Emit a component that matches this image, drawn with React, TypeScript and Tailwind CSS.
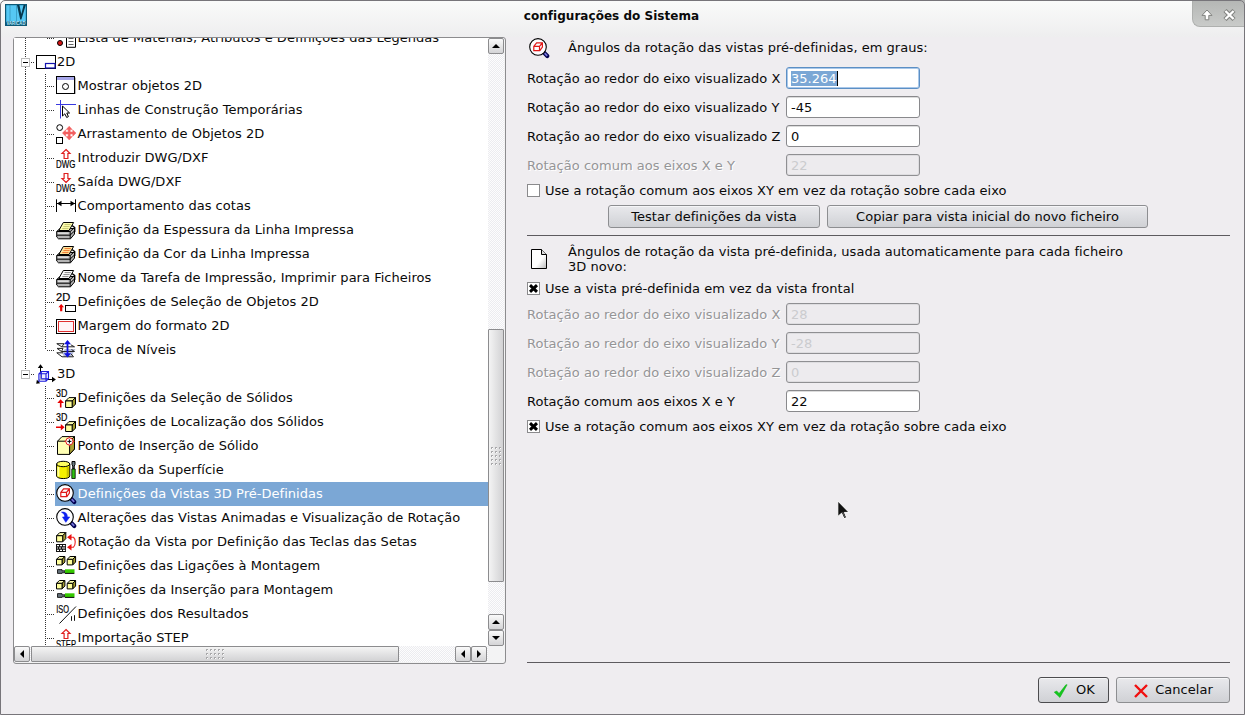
import React from "react";

const BLACK = "#000";
const ISO_FONT = "'Liberation Sans Narrow','Liberation Sans',sans-serif";

function Tiny({ x, y, w, children, size = 10.4 }: { x: number; y: number; w: number; children: string; size?: number }) {
  return (
    <text x={x} y={y} fontSize={size} textLength={w} lengthAdjust="spacingAndGlyphs" fontFamily={ISO_FONT} fill="#000" stroke="#000" strokeWidth=".2">
      {children}
    </text>
  );
}

function Box({ x, y, s }: { x: number; y: number; s: number }) {
  const d = s * 0.34;
  return (
    <g stroke={BLACK} strokeLinejoin="round">
      <path d={`M${x} ${y + d}L${x + d} ${y}H${x + s}L${x + s - d} ${y + d}Z`} fill="#ffffb0" />
      <path d={`M${x + s} ${y}V${y + s - d}L${x + s - d} ${y + s}V${y + d}Z`} fill="#a8a030" />
      <path d={`M${x} ${y + d}H${x + s - d}V${y + s}H${x}Z`} fill="#ffff9c" />
    </g>
  );
}

const outlineUp = <path d="M10 1.5L14 5.5H11.9V10.5H8.1V5.5H6Z" fill="#fff" stroke="#e02020" strokeWidth="1.2" />;
const outlineDown = <path d="M10 10.5L14 6.5H11.9V1.5H8.1V6.5H6Z" fill="#fff" stroke="#e02020" strokeWidth="1.2" />;

function printer(paper: string, ink: string) {
  return (
    <g stroke={BLACK} strokeLinejoin="round">
      <path d="M.7 11.5L4 8.5H18.5V14L14.5 18.8H2.5L.7 17Z" fill="#b4b4b4" />
      <path d="M.7 11.5H14.2L18.5 7.5M14.2 11.5V18.5M1 15.2H14L18.5 11" fill="none" />
      <path d="M2.8 10.5L7.3 2.5H17.6L13 10.5Z" fill={paper} />
      <path d="M8.6 4.6H14.8M7.4 6.6H13.6M6.3 8.6H12.5" fill="none" stroke={ink} />
      <path d="M16 5.5L18.7 7.5V12" fill="none" strokeWidth="1.4" />
      <path d="M2 13.2H12.5" stroke="#eee" />
    </g>
  );
}

const lens = (
  <g>
    <path d="M15 14.6L18.3 18" stroke="#000050" strokeWidth="4.2" strokeLinecap="round" />
    <path d="M15.6 15.2L18.2 17.9" stroke="#7676d8" strokeWidth="1.8" />
    <circle cx="9" cy="8.9" r="8.3" fill="#fdfdff" stroke={BLACK} strokeWidth="1.1" />
  </g>
);

const lensCube = (
  <g>
    {lens}
    <path d="M4.8 8.3L7.6 4.9H13.4V9L10.8 12.6H4.8ZM4.8 8.3H10.5V12.5M10.5 8.3L13.3 5" fill="none" stroke="#e01818" strokeWidth="1.2" />
  </g>
);

const linkBoxes = (
  <g>
    <Box x={0.5} y={0.5} s={8.4} />
    <Box x={11.2} y={0.5} s={8.4} />
    <path d="M1.5 13.6H6V14.8H9V16.8H6V17.4H1.5Z" fill="#647078" stroke={BLACK} strokeWidth=".8" />
    <rect x="9" y="13.3" width="9.5" height="3.7" fill="#35c800" />
    <path d="M9 17.4H18.4" stroke={BLACK} />
  </g>
);

const ICONS: Record<string, React.ReactNode> = {
  list: (
    <g>
      <circle cx="4" cy="15" r="2.5" fill="#d81414" stroke={BLACK} />
      <path d="M10.5 3.5H19.5V19.3H10.5Z" fill="#fff" stroke={BLACK} />
      <path d="M12.5 7.5H17.5M12.5 10.5H17.5M12.5 13.5H17.5M12.5 16.5H17.5" stroke="#666" />
    </g>
  ),
  sheet2d: (
    <g>
      <rect x=".5" y="3.5" width="19" height="13" fill="#fff" stroke={BLACK} />
      <rect x="9.5" y="11.5" width="9.5" height="4.5" fill="#fff" stroke="#1414b0" strokeWidth="1.2" />
    </g>
  ),
  show: (
    <g>
      <rect x="1.5" y="1.5" width="18" height="16.5" fill="#777" />
      <rect x=".5" y=".5" width="18" height="17" fill="#fff" stroke={BLACK} />
      <rect x="1" y="1" width="17" height="3" fill="#a6a6ea" />
      <circle cx="9.5" cy="10.5" r="3" fill="#fff" stroke={BLACK} />
    </g>
  ),
  lines: (
    <g>
      <path d="M0 4.5H20M4.5 0V18.5" stroke="#3838e0" />
      <path d="M6.5 6V16L8.8 13.8L10.7 17.5L12.4 16.6L10.8 13H13.6Z" fill="#fff" stroke={BLACK} />
    </g>
  ),
  drag: (
    <g>
      <circle cx="3.7" cy="3.6" r="2.9" fill="#fff" stroke={BLACK} />
      <rect x=".5" y="13.5" width="6" height="6" fill="#fff" stroke={BLACK} />
      <path d="M13.2 2.2L16.2 5.6H14.2V8H16.8V6L20 9L16.8 12.2V10H14.2V12.6H16.2L13.2 16L10.2 12.6H12.2V10H9.6V12.2L6.4 9L9.6 6V8H12.2V5.6H10.2Z" fill="#f26060" stroke="#f26060" strokeWidth=".5" />
    </g>
  ),
  dwgIn: (
    <g>
      {outlineUp}
      <Tiny x={0} y={20} w={19.4}>DWG</Tiny>
    </g>
  ),
  dwgOut: (
    <g>
      {outlineDown}
      <Tiny x={0} y={20} w={19.4}>DWG</Tiny>
    </g>
  ),
  dim: (
    <g>
      <path d="M.5 3.3V16M19.5 3.3V16M1 7.5H19" stroke={BLACK} />
      <path d="M1 7.5L5.5 4.8V10.2ZM19 7.5L14.5 4.8V10.2Z" />
    </g>
  ),
  print1: printer("#ffffb0", "#c4c470"),
  print2: printer("#ffe6a0", "#f07830"),
  print3: printer("#ffffff", "#8a8a8a"),
  sel2d: (
    <g>
      <Tiny x={0} y={9.2} w={14.3} size={11.6}>2D</Tiny>
      <path d="M5.2 12L8 15.2H6.3V19.3H4.1V15.2H2.4Z" fill="#e80000" />
      <rect x="9.5" y="13.5" width="10" height="6" fill="#fff" stroke={BLACK} />
    </g>
  ),
  margin: (
    <g>
      <rect x=".5" y="3.5" width="19" height="14" fill="#fff" stroke={BLACK} />
      <rect x="2.5" y="5.5" width="15" height="10" fill="#fff4f6" stroke="#e03030" />
    </g>
  ),
  levels: (
    <g stroke="#222" fill="#f2f2f2">
      <path d="M6 12.5L9 9H19.5L15 17H8Z" fill="#b6bedc" stroke="none" />
      <path d="M.8 3.7H8L5.8 6.8H18.5L14.8 4.8M.8 3.7L5.8 6.8M1 8.4H7L5.5 11.5H18.5L15.5 9.5M1 8.4L5.5 11.5M.8 12.8H7M.8 12.8L6 16.8H17.5L15 13.8" fill="none" />
      <path d="M11.5 0L15 4.2H12.4V13.3H15L11.5 17.6L8 13.3H10.6V4.2H8Z" fill="#1010e0" stroke="none" />
    </g>
  ),
  root3d: (
    <g>
      <path d="M4.5 16V2M3 15.5H18M5 15L1 19" stroke={BLACK} fill="none" />
      <path d="M4.5 .3L7.2 4H1.8ZM19.9 15.5L16 12.7V18.3ZM.2 19.8L.9 15.8L4.2 19.2Z" />
      <path d="M2.9 9.8L5.3 7.5H12.5V14.5L10 17.3H2.9ZM2.9 9.8H10V17M10 9.8L12.5 7.5M5.3 8V14.6M5.3 14.7H12" fill="#e8e8ff" fillOpacity=".75" stroke="#1c1cdc" strokeWidth="1.1" />
    </g>
  ),
  sel3d: (
    <g>
      <Tiny x={0} y={8.8} w={11.4} size={11.6}>3D</Tiny>
      <path d="M4.6 11.2L8 15H5.5V19.4H3.9V15H1.3Z" fill="#e80000" />
      <Box x={9.6} y={9.6} s={9.9} />
    </g>
  ),
  loc3d: (
    <g>
      <Tiny x={0} y={8.8} w={11.4} size={11.6}>3D</Tiny>
      <path d="M8.6 15.3L4.8 18.6V16.1H0V14.5H4.8V12Z" fill="#e80000" />
      <Box x={9.6} y={9.6} s={9.9} />
    </g>
  ),
  insert: (
    <g>
      <path d="M1.5 5.2L6 .6H18.5V13L13.6 18.4H1.5Z" fill="#ffffb4" stroke={BLACK} />
      <path d="M13.6 5.2L18.5 .6V13L13.6 18.4Z" fill="#aaa032" stroke={BLACK} />
      <path d="M1.6 5.2H13.6" stroke={BLACK} />
      <circle cx="13.4" cy="5.4" r="3.6" fill="#fff" stroke="#e22020" />
      <path d="M13.4 3.4V7.4M11.4 5.4H15.4" stroke={BLACK} />
      <path d="M13.4 .6V2M13.4 9V10.4M8.5 5.4H10M17 5.4H18.5" stroke="#e22020" />
    </g>
  ),
  surface: (
    <g stroke={BLACK}>
      <path d="M.6 4V16C1 19.4 13.6 19.4 13.8 16V4Z" fill="#f6f000" />
      <path d="M2.4 7V16.5" stroke="#ffffa0" strokeWidth="2" />
      <path d="M11.8 7V16.8" stroke="#c8c000" strokeWidth="2.2" />
      <ellipse cx="7.2" cy="4" rx="6.6" ry="2.7" fill="#ffff60" />
      <path d="M16 1.5H19V4.5L18.2 6V9H16.8V6L16 4.5Z" fill="#6c7c84" />
      <path d="M15.8 9H19.2V18.5H15.8Z" fill="#30c010" strokeWidth=".8" />
    </g>
  ),
  lensCube,
  lensArrow: (
    <g>
      {lens}
      <path d="M5.5 4.2C9 3.6 11.5 5.5 11.3 9H13.7L9.8 14.3L6.5 9H8.6C8.8 7 8 5.5 5.5 4.2Z" fill="#0c20f0" stroke="#0c20f0" strokeWidth=".6" />
    </g>
  ),
  keys: (
    <g>
      <Box x={0.6} y={0.6} s={9.2} />
      <rect x="0" y="12" width="10" height="8" fill="#111" />
      <path d="M1 13.6H3M4 13.6H6M7 13.6H9.2M1 16H2M3 16H5M6 16H9.2M1 18.4H3M4 18.4H6M7 18.4H9.2" stroke="#fff" strokeWidth="1.2" />
      <path d="M14 5.2H17.5C19.8 7 19.8 13 17.5 15.2H14" fill="none" stroke="#ee2020" strokeWidth="1.1" />
      <path d="M11 5.2L15.5 2V8.4ZM11 15.2L15.5 12V18.4Z" fill="#ee1010" />
    </g>
  ),
  link: linkBoxes,
  iso: (
    <g>
      <Tiny x={0.3} y={8.8} w={12.8} size={11.2}>ISO</Tiny>
      <path d="M20 2.5L3.5 19.5M15.5 12.2V16.8M18.5 11.2V16.8" stroke="#111" fill="none" />
    </g>
  ),
  step: (
    <g>
      {outlineUp}
      <Tiny x={0} y={20} w={20}>STEP</Tiny>
    </g>
  ),
};

function Icon({ name }: { name: string }) {
  return (
    <svg width="20" height="20" viewBox="0 0 20 20" className="shrink-0 overflow-visible">
      {ICONS[name]}
    </svg>
  );
}

type Row = { icon: string; text: string; root?: boolean; last?: boolean; sel?: boolean; outer?: boolean };

const ROWS: Row[] = [
  { icon: "list", text: "Lista de Materiais, Atributos e Definições das Legendas", last: true, outer: true },
  { icon: "sheet2d", text: "2D", root: true, outer: true },
  { icon: "show", text: "Mostrar objetos 2D", outer: true },
  { icon: "lines", text: "Linhas de Construção Temporárias", outer: true },
  { icon: "drag", text: "Arrastamento de Objetos 2D", outer: true },
  { icon: "dwgIn", text: "Introduzir DWG/DXF", outer: true },
  { icon: "dwgOut", text: "Saída DWG/DXF", outer: true },
  { icon: "dim", text: "Comportamento das cotas", outer: true },
  { icon: "print1", text: "Definição da Espessura da Linha Impressa", outer: true },
  { icon: "print2", text: "Definição da Cor da Linha Impressa", outer: true },
  { icon: "print3", text: "Nome da Tarefa de Impressão, Imprimir para Ficheiros", outer: true },
  { icon: "sel2d", text: "Definições de Seleção de Objetos 2D", outer: true },
  { icon: "margin", text: "Margem do formato 2D", outer: true },
  { icon: "levels", text: "Troca de Níveis", last: true, outer: true },
  { icon: "root3d", text: "3D", root: true },
  { icon: "sel3d", text: "Definições da Seleção de Sólidos" },
  { icon: "loc3d", text: "Definições de Localização dos Sólidos" },
  { icon: "insert", text: "Ponto de Inserção de Sólido" },
  { icon: "surface", text: "Reflexão da Superfície" },
  { icon: "lensCube", text: "Definições da Vistas 3D Pré-Definidas", sel: true },
  { icon: "lensArrow", text: "Alterações das Vistas Animadas e Visualização de Rotação" },
  { icon: "keys", text: "Rotação da Vista por Definição das Teclas das Setas" },
  { icon: "link", text: "Definições das Ligações à Montagem" },
  { icon: "link", text: "Definições da Inserção para Montagem" },
  { icon: "iso", text: "Definições dos Resultados" },
  { icon: "step", text: "Importação STEP" },
];

const VDOTS = "bg-[repeating-linear-gradient(to_bottom,#333_0_1px,transparent_1px_2px)]";
const HDOTS = "bg-[repeating-linear-gradient(to_right,#333_0_1px,transparent_1px_2px)]";

function TreeRow({ row }: { row: Row }) {
  if (row.root) {
    return (
      <div className="flex h-6 shrink-0 items-center">
        <div className="flex h-full w-[17px] shrink-0 flex-col items-center pl-[6px]">
          <div className={`h-[8px] w-px shrink-0 ${VDOTS}`} />
          <div className="flex h-[9px] w-[9px] shrink-0 items-center justify-center border border-[#bcbcbc] bg-white">
            <div className="h-px w-[5px] bg-black" />
          </div>
          <div className={`h-[7px] w-px shrink-0 ${row.outer ? VDOTS : ""}`} />
        </div>
        <div className={`mr-[2px] h-px w-[3px] shrink-0 ${HDOTS}`} />
        <Icon name={row.icon} />
        <span className="pb-[2px] pl-[1px] whitespace-nowrap">{row.text}</span>
      </div>
    );
  }
  return (
    <div className="flex h-6 shrink-0 items-center">
      <div className={`ml-[11px] h-full w-px shrink-0 ${row.outer ? VDOTS : ""}`} />
      <div className={`ml-[19px] w-px shrink-0 ${row.last ? "h-3 self-start" : "h-full"} ${VDOTS}`} />
      <div className={`ml-px h-px w-[8px] shrink-0 ${HDOTS}`} />
      <div className={`flex h-full flex-1 items-center pl-px ${row.sel ? "bg-[#7ba7d5] text-white" : ""}`}>
        <Icon name={row.icon} />
        <span className="pb-[2px] pl-[1.6px] whitespace-nowrap">{row.text}</span>
      </div>
    </div>
  );
}

function Arrow({ dir }: { dir: "up" | "down" | "left" | "right" }) {
  const d = {
    up: "M4 2L8 6H0Z",
    down: "M4 6L8 2H0Z",
    left: "M2 4L6 0V8Z",
    right: "M6 4L2 0V8Z",
  }[dir];
  return (
    <div className="flex h-4 w-4 shrink-0 items-center justify-center rounded-[2px] border border-[#8c8c8e] bg-linear-to-b from-[#fafafa] to-[#d4d4d6]">
      <svg width="8" height="8" viewBox="0 0 8 8">
        <path d={d} />
      </svg>
    </div>
  );
}

const TROUGH = "bg-[#f8f8f9] bg-[repeating-conic-gradient(#ececf0_0_25%,#fdfdfd_0_50%)] bg-[length:2px_2px]";

function Grip({ vertical }: { vertical?: boolean }) {
  return (
    <div className={`grid gap-[2px] ${vertical ? "grid-cols-3" : "grid-cols-5"}`}>
      {Array.from({ length: 15 }, (_, i) => (
        <span key={i} className="h-[2px] w-[2px] border-t border-l border-[#a8a8aa] bg-white" />
      ))}
    </div>
  );
}

function Field({ label, value, disabled, focus }: { label: string; value: string; disabled?: boolean; focus?: boolean }) {
  return (
    <div className="flex h-[29px] items-center">
      <span className={`w-[259px] pt-px whitespace-nowrap ${disabled ? "text-[#959597] [text-shadow:1px_1px_0_#fff]" : ""}`}>{label}</span>
      <div
        className={`flex h-[22px] w-[134px] items-center rounded-[3px] border pt-px pl-1 ${
          focus
            ? "border-[#5c8fc4] bg-white shadow-[inset_0_0_0_1px_#a9c8ea]"
            : disabled
              ? "border-[#8f8f92] bg-[#edebee] text-[#cbcbce] shadow-[inset_0_0_0_1px_#dedde0]"
              : "border-[#89898c] bg-white shadow-[inset_0_1px_0_#dcdcdc]"
        }`}
      >
        {focus ? <span className="h-[15px] border-r border-black bg-[#7ba7d5] leading-[15px] text-white">{value}</span> : value}
      </div>
    </div>
  );
}

function Check({ label, on }: { label: string; on?: boolean }) {
  return (
    <div className="flex h-4 items-center">
      <div className="mr-[5px] flex h-[13px] w-[13px] items-center justify-center border border-[#8a8a8c] bg-white">
        {on && (
          <svg width="9" height="9" viewBox="0 0 9 9">
            <path d="M1 1.2L8 7.8M8 1.2L1 7.8" stroke="#000" strokeWidth="3" />
          </svg>
        )}
      </div>
      <span className="whitespace-nowrap">{label}</span>
    </div>
  );
}

const BTN =
  "flex items-center justify-center rounded-[3px] border bg-linear-to-b from-[#e9e9ec] via-[#dcdde1] to-[#d0d1d5] whitespace-nowrap shadow-[inset_0_1px_0_#f6f6f8]";

export default function App() {
  return (
    <div className="relative flex h-[715px] w-[1245px] flex-col overflow-hidden bg-[#efedf0] font-['DejaVu_Sans',sans-serif] text-[13px] leading-[15px] tracking-[0.028px] text-[#0a0a0a]">
      <div className="flex h-[37px] shrink-0 items-start bg-linear-to-b from-[#fafbfa] to-[#eeeeef]">
        <svg width="22" height="22" viewBox="0 0 22 22" className="mt-1 ml-[5px]">
          <rect x=".6" y=".6" width="20.8" height="20.8" fill="#55c8f4" stroke="#0b5876" strokeWidth="1.2" />
          <path d="M1 17.5H21M11.5 1V17.5M5 1V17.5" stroke="#2b86ac" strokeWidth=".6" />
          <path d="M12 1H14.4L16.3 10L18.6 1H20.8L16.4 15.5H15.2Z" fill="#06384e" />
          <rect x="1" y="17.5" width="20" height="3.5" fill="#0f5674" />
          <text x="1.5" y="21" fontSize="4.6" fontWeight="bold" textLength="19" lengthAdjust="spacingAndGlyphs" fill="#b9ecff" fontFamily="Liberation Sans">VARICAD</text>
        </svg>
        <div className="flex-1 pt-[9px] pl-[4px] text-center text-[12px] font-bold">configurações do Sistema</div>
        <div className="flex h-[27px] w-[53px] items-center gap-[10px] rounded-bl-[8px] border-b border-l border-[#aeb0ae] bg-linear-to-b from-[#b4b6b4] to-[#c9cbc9] pt-[3px] pl-[8px]">
          <svg width="12" height="12" viewBox="0 0 12 12">
            <path d="M6 1L11 6.4H7.8V10.8H4.2V6.4H1Z" fill="#fff" stroke="#80827f" />
          </svg>
          <svg width="13" height="12" viewBox="0 0 13 12">
            <path d="M2 1.5L11 10.5M11 1.5L2 10.5" stroke="#80827f" strokeWidth="4.4" />
            <path d="M2.4 2L10.6 10M10.6 2L2.4 10" stroke="#fff" strokeWidth="2.4" />
          </svg>
        </div>
      </div>

      <div className="flex h-[627px] shrink-0 items-start">
        <div className="ml-[13px] flex h-[627px] w-[493px] shrink-0 flex-col rounded-[3px] border border-[#8c8c8e] bg-[#f3f3f4]">
          <div className="flex h-[608px]">
            <div className="flex w-[474px] flex-col overflow-hidden bg-white">
              <div className="-mt-3 flex flex-col">
                {ROWS.map((r) => (
                  <TreeRow key={r.text} row={r} />
                ))}
              </div>
            </div>
            <div className={`flex w-4 flex-col ${TROUGH}`}>
              <Arrow dir="up" />
              <div className="mt-[275px] flex h-[253px] items-center justify-center rounded-[1px] border border-[#8c8c8e] bg-linear-to-r from-[#f4f4f4] to-[#d2d2d4]">
                <Grip vertical />
              </div>
              <div className="mt-auto">
                <Arrow dir="up" />
                <Arrow dir="down" />
              </div>
            </div>
          </div>
          <div className="flex h-[16px]">
            <div className={`flex w-[474px] ${TROUGH}`}>
              <Arrow dir="left" />
              <div className="ml-px flex w-[368px] items-center justify-center rounded-[1px] border border-[#8c8c8e] bg-linear-to-b from-[#f4f4f4] to-[#d2d2d4]">
                <Grip />
              </div>
              <div className="ml-auto flex pr-px">
                <Arrow dir="left" />
                <Arrow dir="right" />
              </div>
            </div>
          </div>
        </div>

        <div className="ml-[21px] flex h-[626px] w-[703px] flex-col border-b border-[#5d5b5f]">
          <div className="flex h-[26px] items-start">
            <div className="w-[41px] pt-px pl-[2px]">
              <Icon name="lensCube" />
            </div>
            <span className="pt-[3px]">Ângulos da rotação das vistas pré-definidas, em graus:</span>
          </div>
          <Field label="Rotação ao redor do eixo visualizado X" value="35.264" focus />
          <Field label="Rotação ao redor do eixo visualizado Y" value="-45" />
          <Field label="Rotação ao redor do eixo visualizado Z" value="0" />
          <Field label="Rotação comum aos eixos X e Y" value="22" disabled />
          <div className="pt-[3px]">
            <Check label="Use a rotação comum aos eixos XY em vez da rotação sobre cada eixo" />
          </div>
          <div className="mt-[7px] flex h-[23px] gap-[7px] pl-[81px]">
            <div className={`${BTN} w-[212px] border-[#8d8e91]`}>Testar definições da vista</div>
            <div className={`${BTN} w-[321px] border-[#8d8e91]`}>Copiar para vista inicial do novo ficheiro</div>
          </div>
          <div className="mt-[7px] h-px bg-[#5d5b5f]" />
          <div className="flex h-[44px] pt-[8px]">
            <div className="w-[41px] pt-[5px] pl-[4px]">
              <svg width="16" height="20" viewBox="0 0 16 20">
                <defs>
                  <linearGradient id="pg" x1=".3" y1=".3" x2="1" y2="1">
                    <stop offset=".4" stopColor="#fff" />
                    <stop offset="1" stopColor="#b8b8b8" />
                  </linearGradient>
                </defs>
                <path d="M.5 .5H10.5L15.5 5.5V19.5H.5Z" fill="url(#pg)" stroke="#000" />
                <path d="M10.5 .5V5.5H15.5" fill="#ddd" stroke="#000" />
              </svg>
            </div>
            <div>
              Ângulos de rotação da vista pré-definida, usada automaticamente para cada ficheiro
              <br />
              3D novo:
            </div>
          </div>
          <Check label="Use a vista pré-definida em vez da vista frontal" on />
          <div className="h-[3px]" />
          <Field label="Rotação ao redor do eixo visualizado X" value="28" disabled />
          <Field label="Rotação ao redor do eixo visualizado Y" value="-28" disabled />
          <Field label="Rotação ao redor do eixo visualizado Z" value="0" disabled />
          <Field label="Rotação comum aos eixos X e Y" value="22" />
          <div className="pt-[3px]">
            <Check label="Use a rotação comum aos eixos XY em vez da rotação sobre cada eixo" on />
          </div>
        </div>
      </div>

      <div className="flex justify-end gap-[7px] pt-[13px] pr-[15px]">
        <div className={`${BTN} h-[26px] w-[71px] gap-[8px] border-[#4c4c4f] pb-px pl-px`}>
          <svg width="15" height="14" viewBox="0 0 14 14" className="mt-[2px]">
            <path d="M.8 8.2L3.2 7L5.6 9.6L12.4 .8H13.6L6.4 13.4Z" fill="#14c81e" stroke="#10b018" strokeWidth=".6" />
          </svg>
          OK
        </div>
        <div className={`${BTN} h-[26px] w-[114px] gap-[7px] border-[#8d8e91] pb-px pl-px`}>
          <svg width="14" height="14" viewBox="0 0 14 14" className="mt-[2px]">
            <path d="M1 1L13 13M13 1L1 13" stroke="#f01010" strokeWidth="2.4" />
          </svg>
          Cancelar
        </div>
      </div>

      <svg width="13" height="20" viewBox="0 0 13 20" className="absolute top-[500px] left-[837px]">
        <path d="M.8 1V16.5L4.6 13.2L7 18.6L9.6 17.6L7.4 12.4H12Z" fill="#111" stroke="#fff" />
        <path d="M5.6 12L8 17.6" stroke="#555" strokeWidth="1.2" />
      </svg>
      <div className="pointer-events-none absolute inset-0 rounded-t-[5px] border border-[#77757a]" />
    </div>
  );
}
